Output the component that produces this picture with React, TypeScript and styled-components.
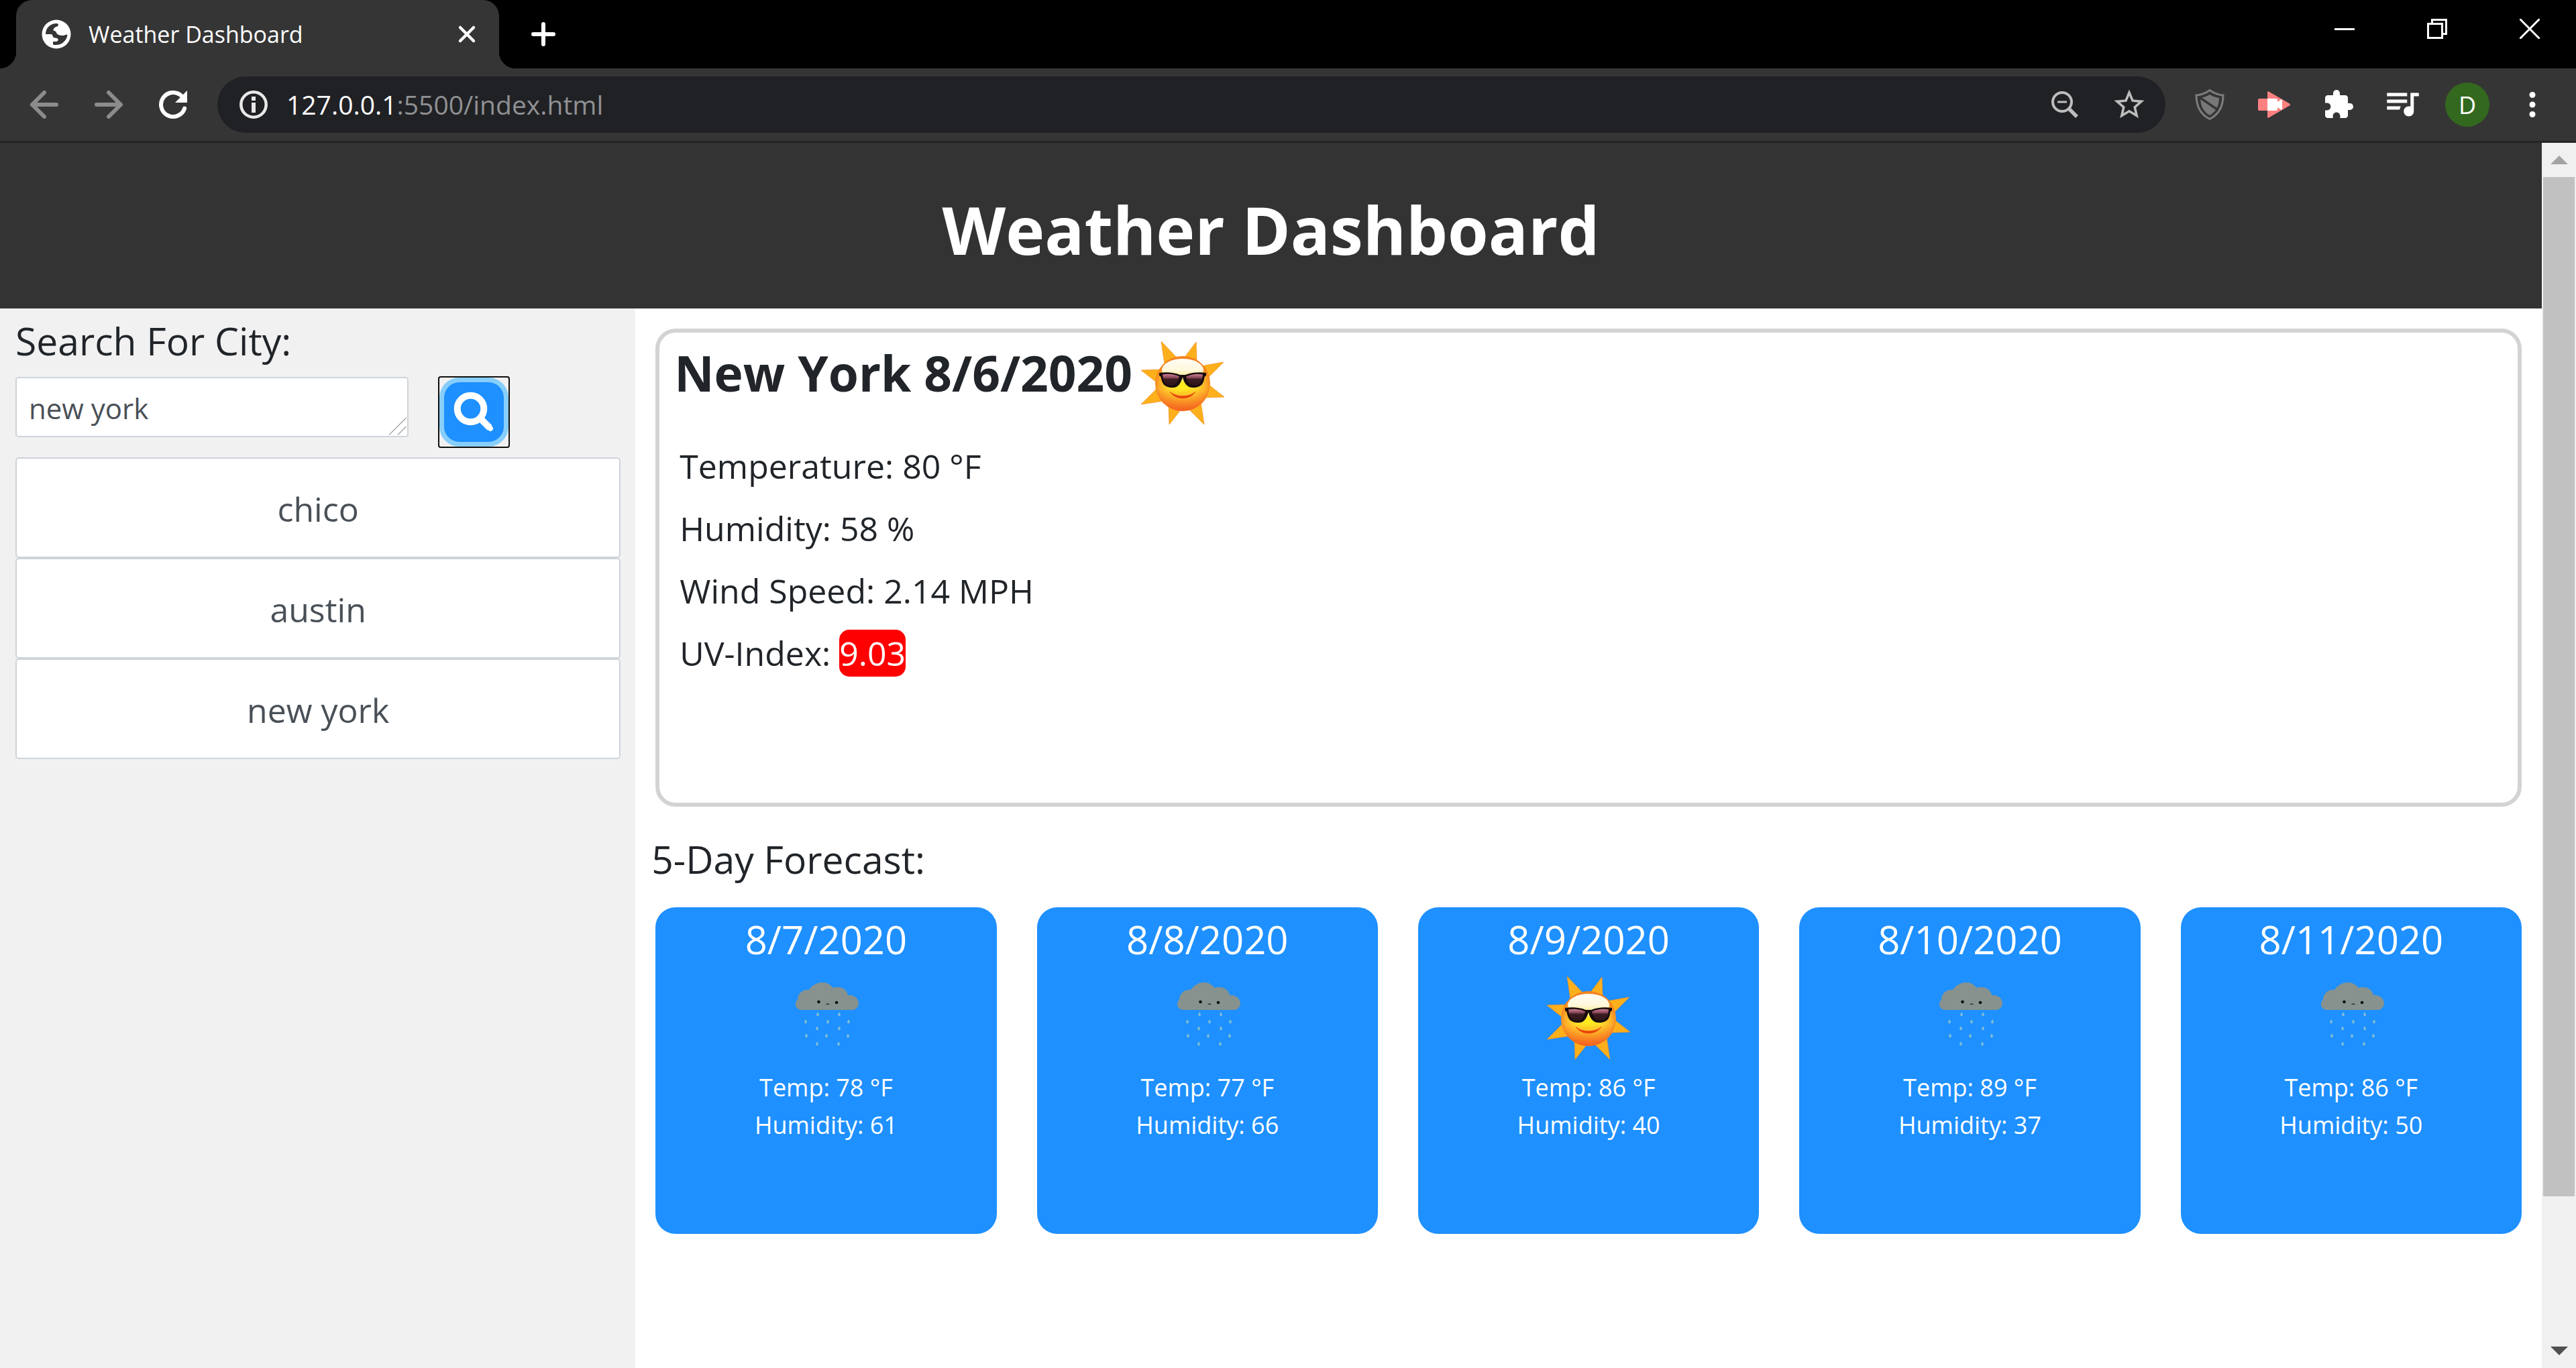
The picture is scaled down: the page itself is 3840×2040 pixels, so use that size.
import React from "react";
import styled, { createGlobalStyle } from "styled-components";
import { MdExtension, MdStarBorder } from "react-icons/md";

const GlobalStyle = createGlobalStyle`
  *, *::before, *::after { box-sizing: border-box; }
  body { margin: 0; background: #fff; }
  body, button, input, textarea { font-family: "Open Sans", "Noto Sans", sans-serif; }
  h1, h2, h3, p, ul { margin: 0; padding: 0; font-weight: 400; }
  button { border: 0; padding: 0; background: none; color: inherit; cursor: pointer; }
  svg { display: block; flex: none; }
`;

/* ---------- browser frame ---------- */

const Window = styled.div`
  display: flex;
  flex-direction: column;
  min-height: 100vh;
`;

const TabStrip = styled.div`
  display: flex;
  height: 102px;
  padding-left: 24px;
  background: #000;
  color: #fff;
`;

const Tab = styled.div`
  position: relative;
  display: flex;
  align-items: center;
  width: 720px;
  padding: 0 33px 0 36px;
  gap: 24px;
  border-radius: 24px 24px 0 0;
  background: #353535;
  &::before, &::after {
    content: "";
    position: absolute;
    bottom: 0;
    width: 24px;
    height: 24px;
  }
  &::before {
    right: 100%;
    background: radial-gradient(circle at 0 0, #000 24px, #353535 24px);
  }
  &::after {
    left: 100%;
    background: radial-gradient(circle at 100% 0, #000 24px, #353535 24px);
  }
`;

const TabTitle = styled.span`
  flex: 1;
  font-size: 34px;
  line-height: 48px;
`;

const NewTab = styled.button`
  display: grid;
  place-items: center;
  width: 84px;
  margin-left: 24px;
`;

const WindowControls = styled.div`
  display: flex;
  height: 86px;
  margin-left: auto;
`;

const WindowButton = styled.button`
  display: grid;
  place-items: center;
  width: 138px;
`;

const Toolbar = styled.div`
  display: flex;
  align-items: center;
  height: 111px;
  padding: 0 18px;
  border-bottom: 3px solid #252525;
  background: #353535;
  color: #fff;
`;

const ToolButton = styled.button<{ $tone?: string }>`
  display: grid;
  place-items: center;
  width: 96px;
  height: 84px;
  color: ${(p) => p.$tone || "#fff"};
`;

const Omnibox = styled.div`
  display: flex;
  flex: 1;
  align-items: center;
  height: 84px;
  margin: 0 18px;
  padding: 0 6px 0 30px;
  border-radius: 42px;
  background: #202124;
`;

const Address = styled.a`
  flex: 1;
  margin-left: 25px;
  color: #8f9093;
  font-size: 39px;
  line-height: 60px;
  text-decoration: none;
`;

const Host = styled.span`
  color: #fff;
`;

const Avatar = styled.span`
  display: grid;
  place-items: center;
  width: 66px;
  height: 66px;
  border-radius: 50%;
  background: #33691e;
  font-size: 36px;
`;

const Viewport = styled.div`
  display: flex;
  flex: 1;
`;

const Page = styled.div`
  display: flex;
  flex: 1;
  flex-direction: column;
  min-width: 0;
  background: #fff;
  color: #212529;
`;

const Scrollbar = styled.div`
  display: flex;
  flex-direction: column;
  width: 51px;
  padding: 0 2px;
  background: #f0f0f0;
`;

const ScrollArrow = styled.button`
  display: grid;
  place-items: center;
  height: 51px;
`;

const Thumb = styled.div`
  flex: 1520;
  background: #c1c1c1;
`;

const TrackRest = styled.div`
  flex: 205;
`;

/* ---------- dashboard ---------- */

const Banner = styled.header`
  display: flex;
  align-items: center;
  justify-content: center;
  height: 247px;
  padding-top: 10px;
  background: #333;
  color: #fff;
`;

const BannerTitle = styled.h1`
  font-size: 98px;
  font-weight: 700;
  line-height: 120px;
`;

const Columns = styled.div`
  display: flex;
  flex: 1;
`;

const Sidebar = styled.aside`
  width: 25%;
  padding: 0 22px 0 23px;
  background: #f1f1f1;
`;

const SearchLabel = styled.label`
  display: block;
  font-size: 57px;
  line-height: 96px;
`;

const SearchRow = styled.form`
  display: flex;
  align-items: flex-start;
  gap: 44px;
  margin: 5px 0 14px;
`;

const FieldWrap = styled.div`
  position: relative;
  width: 65%;
  padding-top: 1px;
`;

const SearchField = styled.textarea`
  display: block;
  width: 100%;
  height: 90px;
  padding: 8px 18px;
  overflow: hidden;
  border: 2px solid #ced4da;
  border-radius: 5px;
  outline: 0;
  background: #fff;
  color: #495057;
  font-size: 42px;
  line-height: 74px;
  resize: none;
`;

const Grip = styled.svg`
  position: absolute;
  right: 3px;
  bottom: 3px;
`;

const SearchButton = styled.button`
  display: grid;
  width: 107px;
  height: 107px;
  padding: 2px;
  border: 2px solid #101010;
  border-radius: 4px;
  background: #f1f1f1;
`;

const SearchFace = styled.span`
  display: grid;
  place-items: center;
  border: 7px solid #87cefa;
  border-radius: 30px;
  margin: -2px;
  background: #1e90ff;
`;

const History = styled.ul`
  list-style: none;
`;

const HistoryButton = styled.button`
  display: block;
  width: 100%;
  height: 150px;
  padding-top: 4px;
  border: 2px solid #ced4da;
  border-radius: 5px;
  background: #fff;
  color: #495057;
  font-size: 50px;
`;

const Main = styled.main`
  flex: 1;
  padding: 30px;
`;

const Current = styled.section`
  min-height: 713px;
  padding: 0 22px;
  border: 6px solid #d3d3d3;
  border-radius: 30px;
`;

const CurrentHead = styled.div`
  display: flex;
  align-items: flex-start;
  gap: 12px;
  margin-bottom: 15px;
`;

const CurrentTitle = styled.h2`
  font-size: 73px;
  font-weight: 700;
  line-height: 120px;
`;

const IconSlot = styled.div<{ $top: number }>`
  display: flex;
  justify-content: center;
  margin-top: ${(p) => p.$top}px;
`;

const Reading = styled.p`
  padding-left: 8px;
  font-size: 50px;
  line-height: 93px;
`;

const UvBadge = styled.span`
  display: inline-block;
  border-radius: 15px;
  background: #f00;
  color: #fff;
  line-height: 70px;
`;

const ForecastTitle = styled.h2`
  margin: 6px 0 0 -6px;
  font-size: 57px;
  line-height: 144px;
`;

const Forecast = styled.section`
  display: grid;
  grid-template-columns: repeat(5, 1fr);
  gap: 60px;
`;

const DayCard = styled.article`
  min-height: 487px;
  border-radius: 30px;
  background: #1e90ff;
  color: #fff;
  text-align: center;
`;

const DayDate = styled.h3`
  font-size: 58px;
  line-height: 96px;
`;

const DayFacts = styled.div`
  margin-top: 13px;
  font-size: 36px;
  line-height: 56px;
`;

/* ---------- drawings ---------- */

const SunIcon = ({ id }: { id: string }) => (
  <svg width="126" height="126" viewBox="0 0 126 126" aria-label="Sunny" role="img">
    <defs>
      <radialGradient id={`${id}-body`} cx="0.5" cy="0.55" r="0.52">
        <stop offset="0" stopColor="#ffec1f" />
        <stop offset="0.45" stopColor="#ffdc2a" />
        <stop offset="0.8" stopColor="#fdb12a" />
        <stop offset="1" stopColor="#f4831f" />
      </radialGradient>
      <linearGradient id={`${id}-low`} x1="0" y1="0" x2="0" y2="1">
        <stop offset="0.6" stopColor="#f4511e" stopOpacity="0" />
        <stop offset="1" stopColor="#f4511e" stopOpacity="0.85" />
      </linearGradient>
      <linearGradient id={`${id}-shine`} x1="0" y1="0" x2="0" y2="1">
        <stop offset="0" stopColor="#fffdf5" />
        <stop offset="0.5" stopColor="#fff8dc" />
        <stop offset="1" stopColor="#ffe98a" stopOpacity="0.6" />
      </linearGradient>
      <linearGradient id={`${id}-lens`} x1="0" y1="0" x2="0" y2="1">
        <stop offset="0" stopColor="#d07d92" />
        <stop offset="0.3" stopColor="#8a4a5c" />
        <stop offset="0.45" stopColor="#3b1c22" />
        <stop offset="1" stopColor="#2c1518" />
      </linearGradient>
    </defs>
    <g fill="#fdb01c" stroke="#f58a1c" strokeWidth="0.7">
      <path d="M31 1 54 25 36 35z" />
      <path d="M83 2 65 26 84 31z" />
      <path d="M124 32 90 38 100 56z" />
      <path d="M125 84 102 66 94 85z" />
      <path d="M95 125 70 100 90 92z" />
      <path d="M43 125 42 96 61 102z" />
      <path d="M1 95 25 71 34 90z" />
      <path d="M1 44 32 43 24 62z" />
    </g>
    <circle cx="63" cy="64" r="41" fill={`url(#${id}-body)`} />
    <circle cx="63" cy="64" r="41" fill={`url(#${id}-low)`} />
    <ellipse cx="63" cy="44" rx="31" ry="17" fill={`url(#${id}-shine)`} />
    <path d="M44 76c8 13 30 13 38 0-8 9-30 9-38 0z" fill="#e8420f" stroke="#e8420f" strokeWidth="0.8" />
    <path d="M28 48c10-1.500 22-1 31 3h8c9-4 21-4.500 31-3v4l-2.500 2c-1 9-4 16-17 16-9 0-13-6-15.500-15.500-3.500 9.500-6 15.500-15 15.500-13 0-16-7-17.500-16l-2.500-2z" fill="#170d0e" />
    <path d="M33 50.500c8-1.500 18-.5 25 3-2 8-5 13.500-12 13.500-9 0-12-6-13-16.500z" fill={`url(#${id}-lens)`} />
    <path d="M93 50.500c-8-1.500-18-.5-25 3 2 8 5 13.500 12 13.500 9 0 12-6 13-16.500z" fill={`url(#${id}-lens)`} />
  </svg>
);

const DROPS = [
  [51, 57], [83, 57], [33, 68], [66, 68], [97, 68], [50, 78], [83, 78],
  [34, 89], [64, 89], [96, 89], [50, 101], [82, 101],
];

const RainIcon = () => (
  <svg width="126" height="126" viewBox="0 0 126 126" aria-label="Rain" role="img">
    <path
      d="M18 43c0-4 1-6 3-7 0-10 8-16 17-15 5-7 12-11 20-11 7 0 12 3 15 8 11-3 21 1 23 11 9-1 16 5 16 12 0 5-4 10-9 10H27c-6 0-9-4-9-8z"
      fill="#87928f"
    />
    <circle cx="52.500" cy="39" r="2.300" fill="#0b0f10" />
    <circle cx="79" cy="40" r="2.300" fill="#0b0f10" />
    <path d="M63.500 42.800q2.500-1.500 5 0" fill="none" stroke="#1f2626" strokeWidth="1.200" />
    <g fill="#7cbbd6">
      {DROPS.map(([x, y]) => (
        <path key={`${x}-${y}`} d={`M${x} ${y - 3}c1.500 2.500 2 3 2 4.200a2 2 0 0 1-4 0c0-1.200.8-1.700 2-4.200z`} />
      ))}
    </g>
  </svg>
);

const GlobeIcon = () => (
  <svg width="48" height="48" viewBox="0 0 48 48" aria-hidden="true">
    <circle cx="24" cy="24" r="21.500" fill="#fff" />
    <path
      d="M8 24C8 15 15 7.500 25 8c2 0 2.500 3 1 4-3 1-7 3-6.500 6.500 3 .5 4.500 2 5 4.500 4 4 11 3.500 14.500 1.500 1.500 0 1.500 1 1.300 2C38 36 29 42 19 39.500V35h4c3 0 4-2 3.500-4-2-2-5-1-6.500-2-2-1.500-1-5-4-5z"
      fill="#353535"
    />
  </svg>
);

const BackIcon = ({ flip }: { flip?: boolean }) => (
  <svg width="48" height="48" viewBox="0 0 48 48" aria-hidden="true" fill="none" stroke="currentColor" strokeWidth="6" strokeLinecap="round" strokeLinejoin="round">
    <path d={flip ? "M24 6 42 24 24 42M42 24H6" : "M24 6 6 24 24 42M6 24H42"} />
  </svg>
);

const ReloadIcon = () => (
  <svg width="48" height="48" viewBox="0 0 48 48" aria-hidden="true">
    <path d="M37 11.500A18 18 0 1 0 41.200 29.500" fill="none" stroke="currentColor" strokeWidth="6" strokeLinecap="round" />
    <path d="M45 3v18H27z" fill="currentColor" />
  </svg>
);

const InfoIcon = () => (
  <svg width="48" height="48" viewBox="0 0 48 48" aria-hidden="true">
    <circle cx="24" cy="24" r="18.700" fill="none" stroke="#e8e8e8" strokeWidth="4.500" />
    <path d="M21 12h6v6h-6zM21 21h6v15h-6z" fill="#e8e8e8" />
  </svg>
);

const ZoomOutIcon = () => (
  <svg width="48" height="48" viewBox="0 0 48 48" aria-hidden="true" fill="none" stroke="currentColor">
    <circle cx="20" cy="20" r="14" strokeWidth="4" />
    <path d="M13 20h14" strokeWidth="3" />
    <path d="M30.500 30.500 42 42" strokeWidth="5.500" />
  </svg>
);

const ShieldIcon = () => (
  <svg width="48" height="48" viewBox="0 0 48 48" aria-hidden="true">
    <path d="M24 2.500C18 7 10 9.500 4 10c0 16 5 28 20 35.500C39 38 44 26 44 10 38 9.500 30 7 24 2.500z" fill="none" stroke="#7c7c7c" strokeWidth="3" />
    <path d="M10 14c5-.5 10-2.500 14-5 4 2.500 9 4.500 14 5-.5 12-4 20-14 26-10-6-13.500-14-14-26z" fill="#787878" />
    <path d="M10 14 35 31" stroke="#353535" strokeWidth="3.500" />
  </svg>
);

const RecorderIcon = () => (
  <svg width="48" height="48" viewBox="0 0 48 48" aria-hidden="true">
    <path d="M2 15h12v18H2a2 2 0 0 1-2-2V17a2 2 0 0 1 2-2z" fill="#ff8080" />
    <path d="M14 5.500q0-2 2-1L47 22.500q2 1.500 0 3L16 43.500q-2 1-2-1z" fill="#ff8080" />
    <path d="M14 15h13q2 0 2 2v3l6-4q1 0 1 1v14q0 1-1 1l-6-4v3q0 2-2 2H14z" fill="#fff" />
  </svg>
);

const QueueIcon = () => (
  <svg width="60" height="60" viewBox="0.5 1 24 24" aria-hidden="true" fill="currentColor">
    <path d="M15 6H3v2h12V6zm0 4H3v2h12v-2zM3 16h7.500l.7-2H3v2zM17 6v8.180c-.31-.11-.65-.18-1-.18-1.660 0-3 1.340-3 3s1.340 3 3 3 3-1.340 3-3V8h3V6h-5z" />
  </svg>
);

const DotsIcon = () => (
  <svg width="48" height="48" viewBox="0 0 48 48" aria-hidden="true" fill="currentColor">
    <circle cx="25" cy="9.500" r="4.500" />
    <circle cx="25" cy="24" r="4.500" />
    <circle cx="25" cy="38.500" r="4.500" />
  </svg>
);

const MagnifierIcon = () => (
  <svg width="62" height="62" viewBox="0 0 62 62" aria-hidden="true" fill="none" stroke="#fff">
    <circle cx="25.500" cy="25.500" r="19.800" strokeWidth="10" />
    <path d="M41 41 54 54" strokeWidth="10" />
    <path d="M48 48 55 55" strokeWidth="8" strokeLinecap="round" />
  </svg>
);

const Triangle = ({ up }: { up?: boolean }) => (
  <svg width="26" height="13" viewBox="0 0 26 13" aria-hidden="true">
    <path d={up ? "M0 13 13 0 26 13z" : "M0 0 13 13 26 0z"} fill={up ? "#a3a3a3" : "#505050"} />
  </svg>
);

/* ---------- data ---------- */

const CITIES = ["chico", "austin", "new york"];

const DAYS = [
  { date: "8/7/2020", sunny: false, temp: 78, humidity: 61 },
  { date: "8/8/2020", sunny: false, temp: 77, humidity: 66 },
  { date: "8/9/2020", sunny: true, temp: 86, humidity: 40 },
  { date: "8/10/2020", sunny: false, temp: 89, humidity: 37 },
  { date: "8/11/2020", sunny: false, temp: 86, humidity: 50 },
];

const BrowserFrame = () => (
  <>
    <TabStrip>
      <Tab>
        <GlobeIcon />
        <TabTitle>Weather Dashboard</TabTitle>
        <button type="button" aria-label="Close tab">
          <svg width="30" height="30" viewBox="0 0 30 30" stroke="#fff" strokeWidth="4.500" strokeLinecap="round">
            <path d="M5 5 25 25M25 5 5 25" />
          </svg>
        </button>
      </Tab>
      <NewTab type="button" aria-label="New tab">
        <svg width="36" height="36" viewBox="0 0 36 36" stroke="#fff" strokeWidth="6" strokeLinecap="round">
          <path d="M3 18H33M18 3V33" />
        </svg>
      </NewTab>
      <WindowControls>
        <WindowButton type="button" aria-label="Minimize">
          <svg width="30" height="30" viewBox="0 0 30 30"><path d="M0 14h30v3H0z" fill="#fff" /></svg>
        </WindowButton>
        <WindowButton type="button" aria-label="Restore">
          <svg width="30" height="30" viewBox="0 0 30 30" fill="none" stroke="#fff" strokeWidth="3">
            <path d="M1.500 7.500h21v21h-21zM7.500 7.500v-6h21v21h-6" />
          </svg>
        </WindowButton>
        <WindowButton type="button" aria-label="Close">
          <svg width="30" height="30" viewBox="0 0 30 30" stroke="#fff" strokeWidth="3">
            <path d="M0 0 30 30M30 0 0 30" />
          </svg>
        </WindowButton>
      </WindowControls>
    </TabStrip>
    <Toolbar>
      <ToolButton type="button" aria-label="Back" $tone="#8c8c8c"><BackIcon /></ToolButton>
      <ToolButton type="button" aria-label="Forward" $tone="#8c8c8c"><BackIcon flip /></ToolButton>
      <ToolButton type="button" aria-label="Reload"><ReloadIcon /></ToolButton>
      <Omnibox>
        <InfoIcon />
        <Address href="#"><Host>127.0.0.1</Host>:5500/index.html</Address>
        <ToolButton type="button" aria-label="Zoom" $tone="#bdbdbd"><ZoomOutIcon /></ToolButton>
        <ToolButton type="button" aria-label="Bookmark" $tone="#bdbdbd"><MdStarBorder size={54} /></ToolButton>
      </Omnibox>
      <ToolButton type="button" aria-label="Shield"><ShieldIcon /></ToolButton>
      <ToolButton type="button" aria-label="Recorder"><RecorderIcon /></ToolButton>
      <ToolButton type="button" aria-label="Extensions"><MdExtension size={48} /></ToolButton>
      <ToolButton type="button" aria-label="Media"><QueueIcon /></ToolButton>
      <ToolButton type="button" aria-label="Profile"><Avatar>D</Avatar></ToolButton>
      <ToolButton type="button" aria-label="Menu"><DotsIcon /></ToolButton>
    </Toolbar>
  </>
);

export default function App() {
  return (
    <Window>
      <GlobalStyle />
      <BrowserFrame />
      <Viewport>
        <Page>
          <Banner>
            <BannerTitle>Weather Dashboard</BannerTitle>
          </Banner>
          <Columns>
            <Sidebar>
              <SearchLabel htmlFor="city">Search For City:</SearchLabel>
              <SearchRow onSubmit={(e) => e.preventDefault()}>
                <FieldWrap>
                  <SearchField id="city" rows={1} spellCheck={false} defaultValue="new york" />
                  <Grip width="26" height="26" viewBox="0 0 26 26" stroke="#555" aria-hidden="true">
                    <path d="M0 25.500 25.500 0M13 25.500 25.500 13" />
                  </Grip>
                </FieldWrap>
                <SearchButton type="submit" aria-label="Search">
                  <SearchFace><MagnifierIcon /></SearchFace>
                </SearchButton>
              </SearchRow>
              <History>
                {CITIES.map((city) => (
                  <li key={city}><HistoryButton type="button">{city}</HistoryButton></li>
                ))}
              </History>
            </Sidebar>
            <Main>
              <Current>
                <CurrentHead>
                  <CurrentTitle>New York 8/6/2020</CurrentTitle>
                  <IconSlot $top={12}><SunIcon id="today" /></IconSlot>
                </CurrentHead>
                <Reading>Temperature: 80 °F</Reading>
                <Reading>Humidity: 58 %</Reading>
                <Reading>Wind Speed: 2.14 MPH</Reading>
                <Reading>UV-Index: <UvBadge>9.03</UvBadge></Reading>
              </Current>
              <ForecastTitle>5-Day Forecast:</ForecastTitle>
              <Forecast>
                {DAYS.map((day) => (
                  <DayCard key={day.date}>
                    <DayDate>{day.date}</DayDate>
                    <IconSlot $top={6}>{day.sunny ? <SunIcon id="day" /> : <RainIcon />}</IconSlot>
                    <DayFacts>
                      <p>Temp: {day.temp} °F</p>
                      <p>Humidity: {day.humidity}</p>
                    </DayFacts>
                  </DayCard>
                ))}
              </Forecast>
            </Main>
          </Columns>
        </Page>
        <Scrollbar>
          <ScrollArrow type="button" aria-label="Scroll up"><Triangle up /></ScrollArrow>
          <Thumb />
          <TrackRest />
          <ScrollArrow type="button" aria-label="Scroll down"><Triangle /></ScrollArrow>
        </Scrollbar>
      </Viewport>
    </Window>
  );
}
